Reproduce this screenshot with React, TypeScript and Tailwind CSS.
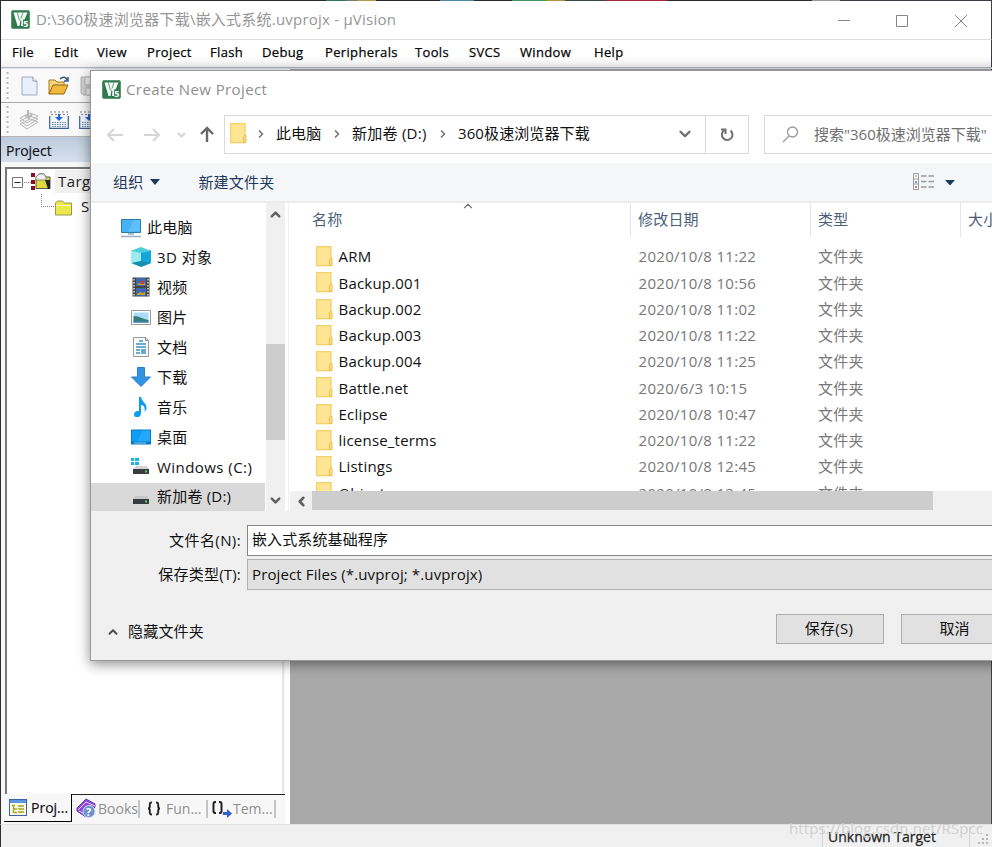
import React from "react";
import { ChevronDown, ChevronLeft, ChevronRight, ChevronUp } from "lucide-react";

const UI = "font-['Open_Sans','Noto_Sans_CJK_SC',sans-serif]";

function Logo() {
  return (
    <svg width="19" height="19" viewBox="0 0 19 19" className="shrink-0">
      <rect x="0.5" y="0.5" width="18" height="18" rx="1.5" fill="#2f7a4c" stroke="#5d9673" />
      <path d="M2.500 2.500h14l-3 7-1.500 6.500H6.500z" fill="#f4faf6" />
      <path d="M6.300 2.500l2.200 8M12 2.500l-2 6" stroke="#4f9069" strokeWidth="0.900" />
      <path d="M9.500 10l-1 6h1.500l.5-5z" fill="#2f7a4c" />
      <rect x="12" y="9.500" width="6" height="8" fill="#2f7a4c" />
      <text x="12.300" y="17.200" fontSize="9" fontWeight="700" fill="#fff" fontFamily="Open Sans">5</text>
    </svg>
  );
}

function Folder() {
  return (
    <svg width="17" height="21" viewBox="0 0 17 21" className="shrink-0">
      <rect x="0.7" y="0.700" width="14.300" height="19" fill="#ffe594" stroke="#f0cd62" strokeWidth="1.200" />
      <path d="M13.500 19.500v-6l1-1h1.500v7z" fill="#ffe08a" stroke="#e8be48" />
    </svg>
  );
}

const menus: [string, string][] = [
  ["File", "w-[42px]"],
  ["Edit", "w-[43px]"],
  ["View", "w-[50px]"],
  ["Project", "w-[63px]"],
  ["Flash", "w-[52px]"],
  ["Debug", "w-[63px]"],
  ["Peripherals", "w-[90px]"],
  ["Tools", "w-[54px]"],
  ["SVCS", "w-[51px]"],
  ["Window", "w-[74px]"],
  ["Help", "w-[40px]"],
];

const strip = [
  ["w-[325px]", "bg-[#2b2b33]"],
  ["w-[20px]", "bg-[#2f7a5c]"],
  ["w-[12px]", "bg-[#777]"],
  ["w-[18px]", "bg-[#b8964a]"],
  ["w-[64px]", "bg-[#26262c]"],
  ["w-[34px]", "bg-[#4a86a5]"],
  ["w-[38px]", "bg-[#2a2a30]"],
  ["w-[35px]", "bg-[#43985a]"],
  ["w-[18px]", "bg-[#b5923c]"],
  ["w-[40px]", "bg-[#39474c]"],
  ["w-[62px]", "bg-[#a52840]"],
  ["w-[145px]", "bg-[#2b2b33]"],
  ["w-[28px]", "bg-[#999]"],
  ["w-[153px]", "bg-[#3a3c48]"],
];

function MainTop() {
  return (
    <div className="shrink-0 border-l border-[#2d2d38]">
      <div className="flex h-px w-full overflow-hidden">
        {strip.map(([w, c], i) => (
          <div key={i} className={`h-px shrink-0 ${w} ${c}`} />
        ))}
      </div>
      <header className="flex h-[39px] items-center border-r border-b border-r-[#3a3c48] border-b-[#dcdcdc] bg-white pb-px pl-[10px]">
        <Logo />
        <span className="ml-[6px] w-[791px] text-[15px] tracking-[0.22px] whitespace-nowrap text-[#969696]">
          D:\360极速浏览器下载\嵌入式系统.uvprojx - µVision
        </span>
        <svg width="141" height="20" viewBox="0 0 141 20" className="translate-y-px" fill="none" stroke="#858585">
          <path d="M11 9.500h12M69.500 4.500h11v11h-11zM128 4l12 12M140 4l-12 12" />
        </svg>
      </header>
      <nav className="flex h-[27px] items-center border-r border-[#3a3c48] bg-linear-to-b from-white from-60% to-[#f1f1f1] pb-px pl-[11px] text-[13px] font-medium tracking-[0.35px] text-black [-webkit-text-stroke:0.25px_#111]">
        {menus.map(([m, w]) => (
          <span key={m} className={`shrink-0 whitespace-nowrap ${w}`}>{m}</span>
        ))}
      </nav>
      <div className="h-[2px] border-b border-[#dfe3e6] bg-[#b2b8bb]" />
    </div>
  );
}

function Grip() {
  return (
    <svg width="4" height="30" viewBox="0 0 4 30" className="shrink-0">
      <path d="M1.500 1v28" stroke="#b9b9b9" strokeWidth="2" strokeDasharray="2 3" />
    </svg>
  );
}

function BuildIcon() {
  return (
    <svg width="20" height="20" viewBox="0 0 20 20" className="shrink-0">
      <path d="M1 2h18M2 4.500h17" stroke="#7b7f88" strokeWidth="1.200" strokeDasharray="2 2" />
      <path d="M.7 6v12.300h18.600V6" fill="#f4f8ff" stroke="#3e5f91" strokeWidth="1.200" />
      <path d="M3 12.500h14M3 14.500h14M3 16.500h14" stroke="#6280ae" strokeDasharray="1.500 1" />
      <path d="M9 4h2v3h3l-4 4-4-4h3z" fill="#2467d9" />
    </svg>
  );
}

function Toolbars() {
  return (
    <>
      <div className="flex h-[34px] shrink-0 items-center border-b border-[#a8a8a8] bg-[#f9f9f9] pl-[5px]">
        <Grip />
        <svg width="18" height="20" viewBox="0 0 18 20" className="ml-[11px]">
          <path d="M1 1h11l4 4v14H1z" fill="#e9effb" stroke="#a2a9b8" />
          <path d="M12 1v4h4" fill="#fff" stroke="#8d95a6" />
        </svg>
        <svg width="22" height="20" viewBox="0 0 22 20" className="ml-[9px]">
          <path d="M1 18V4h6l2 2h7v3" fill="#f6d57c" stroke="#a67b20" />
          <path d="M1 18l4-9h15l-4 9z" fill="#f3b93f" stroke="#94670f" />
          <path d="M12 3c3-3 6-2 7 1M20 1v4h-4" fill="none" stroke="#36567f" strokeWidth="1.500" />
        </svg>
        <svg width="20" height="20" viewBox="0 0 20 20" className="ml-[10px]">
          <path d="M1 1h17v18H3l-2-2z" fill="#d2d2d2" stroke="#b4b4b4" />
          <path d="M5 1h10v8H5zM6 12h9v7H6z" fill="#f2f2f2" stroke="#b8b8b8" />
        </svg>
      </div>
      <div className="flex h-[34px] shrink-0 items-center border-b border-[#b5b5b5] bg-[#f9f9f9] pl-[5px]">
        <Grip />
        <svg width="20" height="20" viewBox="0 0 20 20" className="ml-[9px]" fill="#f5f5f5" stroke="#b8b8b8">
          <path d="M1 14l10-5 8 3-11 7zM1 11l10-5 8 3-11 7zM1 8l10-5 8 3-11 7z" />
          <path d="M9 0v7M6 5l3.500 3L13 4" fill="none" strokeWidth="2" />
        </svg>
        <div className="ml-[10px] flex gap-[10px]"><BuildIcon /><BuildIcon /></div>
      </div>
    </>
  );
}

function Tabs() {
  const sep = "h-[18px] w-[2px] shrink-0 bg-[#c4c4c4]";
  return (
    <div className="flex h-[30px] shrink-0 items-start bg-[#f7f7f7] pl-[3px] text-[14px] text-[#8f8f8f]">
      <div className="flex h-[28px] w-[68px] shrink-0 items-center border-r border-b border-black bg-[#f7f7f7] pl-[5px] text-[#171020]">
        <svg width="18" height="17" viewBox="0 0 18 17">
          <rect x=".5" y=".5" width="17" height="16" fill="#fafbe0" stroke="#3c64a5" />
          <path d="M1 1h16v3H1z" fill="#5b95e8" />
          <path d="M3 6.500h3M5 10h3M5 13.500h3M4.500 6v8M9 7h6M9 10h6M9 13h6" stroke="#a3a52b" strokeWidth="1.300" />
        </svg>
        <span className="ml-[4px] [-webkit-text-stroke:0.2px_#171020]">Proj...</span>
      </div>
      <div className="flex h-[28px] grow items-center border-t border-[#222]">
        <svg width="21" height="21" viewBox="0 0 21 21" className="ml-[4px] shrink-0">
          <path d="M1 10L10 1l9 5v3l-9 10-9-6z" fill="#8b48d7" stroke="#6633ad" />
          <path d="M2 12l8-8 9 4M3 13l8 4" stroke="#e5d3ff" fill="none" />
          <circle cx="13" cy="13.500" r="6" fill="#6f90ce" stroke="#d3def4" />
          <text x="10" y="17.500" fontSize="11" fontWeight="700" fill="#fff">?</text>
        </svg>
        <span className="ml-px w-[40px] shrink-0 whitespace-nowrap">Books</span>
        <i className={sep} />
        <svg width="16" height="16" viewBox="0 0 16 16" className="mr-[4px] ml-[6px] shrink-0" fill="none" stroke="#222" strokeWidth="1.900">
          <path d="M6 1.500c-2 0-2.200.5-2.200 2v2c0 1.300-.5 2-1.800 2 1.300 0 1.800.7 1.800 2v2c0 1.500.2 2 2.200 2M10 1.500c2 0 2.200.5 2.200 2v2c0 1.300.5 2 1.800 2-1.300 0-1.800.7-1.800 2v2c0 1.500-.2 2-2.200 2" />
        </svg>
        <span className="w-[40px] shrink-0 whitespace-nowrap">Fun...</span>
        <i className={sep} />
        <svg width="22" height="20" viewBox="0 0 22 20" className="ml-[3px] shrink-0">
          <path d="M5 3H4Q2.500 3 2.500 5v7Q2.500 14 4 14h1M8 3h1q1.500 0 1.500 2v7q0 2-1.500 2H8" fill="none" stroke="#222" strokeWidth="2" />
          <path d="M12 13h4v-3l5 4.500-5 4.500v-3h-4z" fill="#315fce" />
        </svg>
        <span className="w-[41px] shrink-0 whitespace-nowrap">Tem...</span>
        <i className={sep} />
      </div>
    </div>
  );
}

function ProjectPane() {
  return (
    <aside className="flex w-[284px] shrink-0 flex-col bg-[#f7f7f7]">
      <Toolbars />
      <div className="flex h-[25px] shrink-0 items-center bg-linear-to-b from-[#bccbdd] to-[#d5e0ec] pt-px pl-[5px] text-[14px] text-[#15151c] [-webkit-text-stroke:0.2px_#15151c]">Project</div>
      <div className="mt-[5px] ml-[4px] flex h-[627px] w-[279px] shrink-0 flex-col border-t-2 border-r-2 border-l-2 border-[#777] border-r-[#e6e6e6] bg-white">
        <div className="flex h-[25px] items-center pl-[5px]">
          <svg width="40" height="22" viewBox="0 0 40 22" className="shrink-0">
            <path d="M.5 6.500h10v10H.5z" fill="#fff" stroke="#777" />
            <path d="M2.500 11.500h6" stroke="#222" />
            <path d="M12 11.500h8" stroke="#888" strokeDasharray="1 1" />
            <path d="M19 2h4v4h-4zM19 9h4v4h-4zM19 15h4v4h-4z" fill="#8e1020" />
            <path d="M24 17.500V6l3-3h5l2 3h4v11.500z" fill="#dedc3c" stroke="#555" />
            <path d="M24 6l3-3h5l2 3v3H24z" fill="#eee" stroke="#777" strokeWidth=".8" />
            <path d="M33 9h5v9h-2z" fill="#222" />
          </svg>
          <span className="ml-[3px] w-[36px] overflow-hidden bg-[#f0f0f0] px-[3px] text-[15px] tracking-[0.4px] whitespace-nowrap text-[#222]">Targ</span>
        </div>
        <div className="flex h-[25px] items-center pl-[34px]">
          <svg width="32" height="26" viewBox="0 0 32 26" className="shrink-0">
            <path d="M.5 0v12.500h13" fill="none" stroke="#888" strokeDasharray="1 1" />
            <path d="M14.500 21V9l2-2h5l2 2h7v12z" fill="#ece94e" stroke="#9b9652" />
            <path d="M15 11.500h15" stroke="#faf9b8" />
          </svg>
          <span className="ml-[8px] text-[15px] text-[#222]">S</span>
        </div>
      </div>
      <Tabs />
    </aside>
  );
}

function SidebarIcon({ kind }: { kind: string }) {
  const body: Record<string, React.ReactNode> = {
    pc: <><path d="M.5 1.500h19v13H.5z" fill="#45b3f5" stroke="#2b7bac" /><path d="M13 2h6v11L7 14z" fill="#6ac8ff" opacity=".6" /><path d="M7 16h6M0 18.500h20" stroke="#98afc0" strokeWidth="1.600" /></>,
    cube: <><path d="M0 4l10-4v15L0 16z" fill="#a4edf0" /><path d="M10 4l10-1v13l-10 4z" fill="#12a7cc" /><path d="M0 16l10-3 10 3-10 4z" fill="#158fae" /><path d="M10 5v9L0 16V4z" fill="#9eeaf0" /><path d="M10 5v9l10 2V4z" fill="#12a7d8" /><path d="M0 4l10-4 10 4-10 2z" fill="#4dcdda" /></>,
    video: <><path d="M1.500 .5h17v19h-17z" fill="#444" /><path d="M3 2v17M17 2v17" stroke="#ddd" strokeWidth="1.500" strokeDasharray="1.500 1.500" /><path d="M5 1h10v8H5zM5 11h10v8H5z" fill="#3f68b0" /><path d="M6 8l2-2 3 1 3-1v2zM6 17l3-2 3 1 2-1v3H6z" fill="#ca9d24" /><path d="M10 4h3v3h-3z" fill="#cf392b" /></>,
    image: <><path d="M.5 3.500h19v14H.5z" fill="#fff" stroke="#999" /><path d="M2.500 5.500h15v10h-15z" fill="#a9dcf7" /><path d="M2.500 9c6 0 9 3 15 4v2.500h-15z" fill="#347d7b" /><path d="M2.500 14h15v1.500h-15z" fill="#3a82b8" /></>,
    doc: <><path d="M2.500 .5h12l3 3v16h-15z" fill="#fafafa" stroke="#999" /><path d="M14.500.5v3h3" fill="none" stroke="#888" /><path d="M8 4h4M5 7h10M5 10h10M5 13h4M5 16h4" stroke="#4193c3" strokeWidth="1.500" /><path d="M10 12h5v5h-5z" fill="#68a8d2" /></>,
    download: <path d="M6.500.5h7V10h6L10 19.500.5 10h6z" fill="#3292e4" stroke="#2b80ca" />,
    music: <path d="M8 0h2c1 5 6 6 5.500 12-.5 1-1 2-2 3 1-5-1-7-3.500-7v8c0 3-2 4.500-4 4.500S3 18.500 3 17s2-3.500 5-3z" fill="#079df0" />,
    desktop: <><path d="M0 2.500h20v15H0z" fill="#0878c5" /><path d="M1 3.500h18v11H1z" fill="#0f9df7" /><path d="M12 3.500h7v11H6z" fill="#31affb" opacity=".6" /><path d="M3 16h12" stroke="#8dcef5" /></>,
    win: <><path d="M0 1h3v3H0zM4 1h4v3H4zM0 5h3v3H0zM4 5h4v3H4z" fill="#13b4ef" /><path d="M5 9h11l2 3H2z" fill="#d3d3d3" /><path d="M2 12h16v5H2z" fill="#393d40" /><path d="M14 13.500h2v2h-2z" fill="#53d955" /></>,
    drive: <><path d="M4 9h12l2 3H2z" fill="#c8c8c8" /><path d="M2 12h16v5H2z" fill="#393d40" /><path d="M14 13.500h2v2h-2z" fill="#53d955" /></>,
  };
  return <svg width="20" height="20" viewBox="0 0 20 20" className="shrink-0">{body[kind]}</svg>;
}

const places = [
  ["pc", "此电脑"], ["cube", "3D 对象"], ["video", "视频"], ["image", "图片"], ["doc", "文档"],
  ["download", "下载"], ["music", "音乐"], ["desktop", "桌面"], ["win", "Windows (C:)"], ["drive", "新加卷 (D:)"],
];

const files = [
  ["ARM", "2020/10/8 11:22"], ["Backup.001", "2020/10/8 10:56"], ["Backup.002", "2020/10/8 11:02"],
  ["Backup.003", "2020/10/8 11:22"], ["Backup.004", "2020/10/8 11:25"], ["Battle.net", "2020/6/3 10:15"],
  ["Eclipse", "2020/10/8 10:47"], ["license_terms", "2020/10/8 11:22"], ["Listings", "2020/10/8 12:45"],
  ["Object", "2020/10/8 12:45"],
];

function AddressBar() {
  const crumb = <ChevronRight size={12} strokeWidth={3.5} className="shrink-0 text-[#777]" />;
  return (
    <div className="flex h-[39px] w-[1000px] items-center text-[15px] text-[#111]">
      <svg width="133" height="20" viewBox="0 0 133 20" className="shrink-0" fill="none" strokeWidth="2">
        <path d="M32 10H17M23 4l-6 6 6 6M53 10h15M62 4l6 6-6 6M87 8l3.500 3.500L94 8" stroke="#d5d5d5" />
        <path d="M116 17V3M110 9l6-6 6 6" stroke="#686868" strokeWidth="2.400" />
      </svg>
      <div className="flex h-[39px] w-[525px] shrink-0 border border-[#d9d9d9] bg-white">
        <div className="flex w-[481px] items-center border-r border-[#d9d9d9] pb-[2px] pl-[5px]">
          <Folder />
          <span className="ml-[8px]">{crumb}</span>
          <span className="ml-[9px] w-[46px] tracking-[0.1px] whitespace-nowrap">此电脑</span>
          <span className="ml-[9px]">{crumb}</span>
          <span className="ml-[9px] w-[76px] tracking-[0.25px] whitespace-nowrap">新加卷 (D:)</span>
          <span className="ml-[9px]">{crumb}</span>
          <span className="ml-[9px] tracking-[0.1px] whitespace-nowrap">360极速浏览器下载</span>
          <ChevronDown size={18} strokeWidth={3.2} className="mr-[11px] ml-auto text-[#707070]" />
        </div>
        <div className="flex grow items-center justify-center">
          <svg width="16" height="16" viewBox="0 0 16 16" fill="none" stroke="#707070" strokeWidth="2">
            <path d="M11.500 3.600A5.300 5.300 0 1 1 5 3.500M2 2.500h4.500V7" />
          </svg>
        </div>
      </div>
      <div className="ml-[15px] flex h-[39px] w-[300px] shrink-0 items-center border border-[#d9d9d9] pb-px pl-[17px] text-[#6f6f6f]">
        <svg width="17" height="17" viewBox="0 0 17 17" fill="none" stroke="#999" strokeWidth="1.300">
          <circle cx="10.500" cy="6" r="5" /><path d="M7 10l-6 6" />
        </svg>
        <span className="ml-[15px] whitespace-nowrap">搜索"360极速浏览器下载"</span>
      </div>
    </div>
  );
}

function Sidebar() {
  return (
    <div className="flex w-[199px] shrink-0 bg-white">
      <div className="flex w-[174px] flex-col pt-[10px] text-[15px] text-[#111]">
        {places.map(([k, t], i) => (
          <div key={k} className={`flex shrink-0 items-center whitespace-nowrap ${i === 0 ? "h-[30px] pb-px pl-[30px]" : i === 9 ? "h-[29px] bg-[#d9d9d9] pb-[2px] pl-[40px]" : "h-[30px] pb-[2px] pl-[40px]"}`}>
            <SidebarIcon kind={k} />
            <span className={`ml-[6px] ${k === "win" ? "tracking-[0.45px]" : k === "cube" ? "tracking-[0.4px]" : "tracking-[0.2px]"}`}>{t}</span>
          </div>
        ))}
      </div>
      <div className="ml-px flex w-[19px] flex-col items-center bg-[#f0f0f0]">
        <ChevronUp size={15} strokeWidth={4} className="mt-[4px] shrink-0 text-[#606060]" />
        <div className="mt-[122px] h-[96px] w-full shrink-0 bg-[#cdcdcd]" />
        <ChevronDown size={15} strokeWidth={4} className="mt-auto mb-[3px] shrink-0 text-[#606060]" />
      </div>
      <div className="ml-[3px] w-px bg-[#f0f0f0]" />
    </div>
  );
}

function FileList() {
  return (
    <div className="flex w-[702px] flex-col bg-white">
      <div className="flex h-[34px] shrink-0 text-[15px] tracking-[0.2px] text-[#4c607a]">
        <div className="relative flex w-[341px] shrink-0 items-center border-r border-[#e5e5e5] pb-[2px] pl-[22px]">
          名称
          <ChevronUp size={14} strokeWidth={2} className="absolute top-[-4px] left-[171px] text-[#777]" />
        </div>
        <div className="flex w-[180px] shrink-0 items-center border-r border-[#e5e5e5] pb-[2px] pl-[7px]">修改日期</div>
        <div className="flex w-[150px] shrink-0 items-center border-r border-[#e5e5e5] pb-[2px] pl-[7px]">类型</div>
        <div className="flex items-center pb-[2px] pl-[7px] whitespace-nowrap">大小</div>
      </div>
      <div className="h-[254px] shrink-0 overflow-hidden pt-[6.6px] text-[15px]">
        {files.map(([n, d]) => (
          <div key={n} className="flex h-[26.250px] items-center whitespace-nowrap text-[#777]">
            <div className="flex w-[348.5px] shrink-0 items-center pl-[25.5px] tracking-[0.2px] text-[#111]">
              <Folder /><span className="ml-[6px]">{n}</span>
            </div>
            <span className="w-[179.5px] shrink-0 tracking-[0.3px]">{d}</span>
            <span className="tracking-[0.2px]">文件夹</span>
          </div>
        ))}
      </div>
      <div className="flex h-[20px] shrink-0 bg-[#f0f0f0]">
        <div className="flex w-[22px] items-center justify-center"><ChevronLeft size={15} strokeWidth={4} className="text-[#606060]" /></div>
        <div className="h-[19px] w-[621px] bg-[#cdcdcd]" />
      </div>
    </div>
  );
}

function Dialog() {
  return (
    <section className="absolute top-[70px] left-[90px] flex h-[591px] w-[940px] flex-col border border-[#999] bg-white shadow-[0_3px_12px_rgba(0,0,0,0.45)]">
      <div className="flex h-[37px] shrink-0 items-center pl-[11px]">
        <Logo /><span className="ml-[5px] text-[15px] tracking-[0.4px] text-[#8e8e8e]">Create New Project</span>
      </div>
      <div className="shrink-0 pt-[7px]"><AddressBar /></div>
      <div className="mt-[9px] flex h-[40px] shrink-0 items-center border-b-2 border-[#ececec] bg-[#f4f6f8] pl-[22px] text-[15px] tracking-[0.2px] text-[#1e395b]">
        组织
        <i className="ml-[7px] border-x-[5px] border-t-[6px] border-x-transparent border-t-[#1e395b]" />
        <span className="ml-[38px] w-[715px] shrink-0">新建文件夹</span>
        <svg width="44" height="18" viewBox="0 0 44 18" className="shrink-0">
          <path d="M.5.5h5v16h-5zM0 6h6M0 11h6" fill="#fff" stroke="#999" />
          <path d="M3 2v2" stroke="#777" /><path d="M3 8v2" stroke="#2684ed" strokeWidth="1.500" /><path d="M3 13v2" stroke="#e3422c" strokeWidth="1.500" />
          <path d="M8 3h13M8 8.500h13M8 14h13" stroke="#999" strokeWidth="1.500" strokeDasharray="5.500 2" />
          <path d="M32 7h10l-5 5.500z" fill="#1e395b" />
        </svg>
      </div>
      <div className="flex h-[308px] w-[901px] shrink-0"><Sidebar /><FileList /></div>
      <div className="flex grow flex-col bg-[#f0f0f0] pt-[14px] text-[15px] tracking-[0.12px] text-[#111]">
        <div className="flex h-[31px] shrink-0 items-center">
          <span className="w-[150px] text-right tracking-[0.4px] whitespace-nowrap">文件名(N):</span>
          <div className="ml-[6px] flex h-[31px] w-[760px] items-center border border-[#858585] bg-white pb-[2px] pl-[4px]">嵌入式系统基础程序</div>
        </div>
        <div className="mt-[3px] flex h-[31px] shrink-0 items-center">
          <span className="w-[150px] text-right tracking-[0.2px] whitespace-nowrap">保存类型(T):</span>
          <div className="ml-[6px] flex h-[31px] w-[760px] items-center border border-[#b0b0b0] bg-[#e1e1e1] pl-[4px]">Project Files (*.uvproj; *.uvprojx)</div>
        </div>
        <div className="mt-[24px] flex h-[30px] shrink-0">
          <div className="mt-[5px] flex w-[685px] items-center pl-[15px]">
            <ChevronUp size={14} strokeWidth={3.500} className="text-[#505050]" /><span className="ml-[8px] tracking-[0.2px]">隐藏文件夹</span>
          </div>
          <div className="flex w-[108px] items-center justify-center border border-[#adadad] bg-[#e1e1e1] pr-[2px] pb-[2px] tracking-[0.3px]">保存(S)</div>
          <div className="ml-[17px] flex w-[108px] items-center justify-center border border-[#adadad] bg-[#e1e1e1] pr-px pb-[2px]">取消</div>
        </div>
      </div>
    </section>
  );
}

export default function App() {
  return (
    <div className={`relative flex h-[847px] w-[992px] flex-col overflow-hidden bg-[#f0f0f0] ${UI}`}>
      <MainTop />
      <div className="flex h-[755px] shrink-0 border-l border-[#2d2d38] bg-white">
        <ProjectPane />
        <div className="ml-[5px] w-[702px] border-r border-[#444] bg-[#a9a9a9]" />
      </div>
      <footer className="flex h-[23px] shrink-0 items-center border-t border-l border-t-[#e2e2e2] border-l-[#2d2d38] bg-[#f0f0f0] pt-px text-[14px] font-medium text-[#222]">
        <i className="ml-[821px] h-[20px] w-px bg-[#d5d5d5]" />
        <span className="ml-[5px] w-[141px] [-webkit-text-stroke:0.25px_#222]">Unknown Target</span>
        <i className="h-[20px] w-px bg-[#d5d5d5]" />
        <svg width="12" height="12" viewBox="0 0 12 12" className="mt-[6px] ml-[7px]" fill="#b5b5b5">
          <path d="M9 0h2v2H9zM5 4h2v2H5zM9 4h2v2H9zM1 8h2v2H1zM5 8h2v2H5zM9 8h2v2H9z" />
        </svg>
      </footer>
      <Dialog />
      <span className="absolute top-[817px] left-[789px] text-[15px] tracking-[0.1px] whitespace-nowrap text-[#cfcfcf]">https://blog.csdn.net/RSpcc</span>
    </div>
  );
}
